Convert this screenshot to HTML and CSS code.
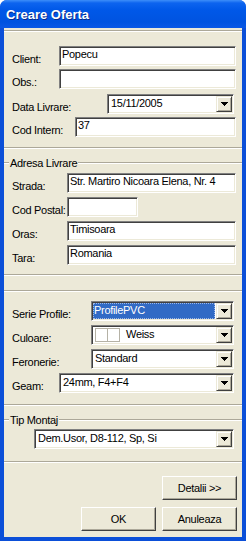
FILE: index.html
```html
<!DOCTYPE html>
<html lang="ro">
<head>
    <meta charset="UTF-8">
    <title>Creare Oferta</title>
    <link rel="stylesheet" href="styles.css">
</head>
<body>
    <div class="window">
        <div class="titlebar">Creare Oferta</div>
        <div class="client">
            <div class="etch top"></div>

            <div class="row first">
                <span class="lbl narrow">Client:</span>
                <div class="edit">Popecu</div>
            </div>
            <div class="row gap3">
                <span class="lbl narrow">Obs.:</span>
                <div class="edit"></div>
            </div>
            <div class="row gap5">
                <span class="lbl date">Data Livrare:</span>
                <div class="combo">
                    <span class="combo-text">15/11/2005</span>
                    <span class="drop"><svg width="7" height="4" viewBox="0 0 7 4"><path d="M0 0h7v1h-1v1h-1v1h-1v1h-1v-1h-1v-1h-1v-1h-1z"/></svg></span>
                </div>
            </div>
            <div class="row gap3">
                <span class="lbl code">Cod Intern:</span>
                <div class="edit">37</div>
            </div>

            <div class="etch after-1"></div>

            <div class="group-head">
                <span class="tick"></span>
                <span class="group-title">Adresa Livrare</span>
                <span class="line"></span>
            </div>
            <div class="row gap3">
                <span class="lbl addr">Strada:</span>
                <div class="edit">Str. Martiro Nicoara Elena, Nr. 4</div>
            </div>
            <div class="row gap4">
                <span class="lbl addr">Cod Postal:</span>
                <div class="edit short"></div>
            </div>
            <div class="row gap4">
                <span class="lbl addr">Oras:</span>
                <div class="edit">Timisoara</div>
            </div>
            <div class="row gap4">
                <span class="lbl addr">Tara:</span>
                <div class="edit">Romania</div>
            </div>

            <div class="etch after-2"></div>
            <div class="etch before-3"></div>

            <div class="row gap9">
                <span class="lbl wide">Serie Profile:</span>
                <div class="combo">
                    <span class="combo-text selected">ProfilePVC</span>
                    <span class="drop"><svg width="7" height="4" viewBox="0 0 7 4"><path d="M0 0h7v1h-1v1h-1v1h-1v1h-1v-1h-1v-1h-1v-1h-1z"/></svg></span>
                </div>
            </div>
            <div class="row gap4">
                <span class="lbl wide">Culoare:</span>
                <div class="combo">
                    <span class="swatch"><span></span><span></span></span>
                    <span class="combo-text">Weiss</span>
                    <span class="drop"><svg width="7" height="4" viewBox="0 0 7 4"><path d="M0 0h7v1h-1v1h-1v1h-1v1h-1v-1h-1v-1h-1v-1h-1z"/></svg></span>
                </div>
            </div>
            <div class="row gap4">
                <span class="lbl wide">Feronerie:</span>
                <div class="combo">
                    <span class="combo-text">Standard</span>
                    <span class="drop"><svg width="7" height="4" viewBox="0 0 7 4"><path d="M0 0h7v1h-1v1h-1v1h-1v1h-1v-1h-1v-1h-1v-1h-1z"/></svg></span>
                </div>
            </div>
            <div class="row gap4">
                <span class="lbl narrow">Geam:</span>
                <div class="combo">
                    <span class="combo-text">24mm, F4+F4</span>
                    <span class="drop"><svg width="7" height="4" viewBox="0 0 7 4"><path d="M0 0h7v1h-1v1h-1v1h-1v1h-1v-1h-1v-1h-1v-1h-1z"/></svg></span>
                </div>
            </div>

            <div class="etch after-3"></div>

            <div class="group-head">
                <span class="tick"></span>
                <span class="group-title">Tip Montaj</span>
                <span class="line"></span>
            </div>
            <div class="row gap2">
                <span class="lbl indent"></span>
                <div class="combo">
                    <span class="combo-text">Dem.Usor, D8-112, Sp, Si</span>
                    <span class="drop"><svg width="7" height="4" viewBox="0 0 7 4"><path d="M0 0h7v1h-1v1h-1v1h-1v1h-1v-1h-1v-1h-1v-1h-1z"/></svg></span>
                </div>
            </div>

            <div class="etch after-4"></div>

            <div class="buttons details">
                <button class="btn">Detalii &gt;&gt;</button>
            </div>
            <div class="buttons actions">
                <button class="btn">OK</button>
                <button class="btn">Anuleaza</button>
            </div>
        </div>
    </div>
</body>
</html>
```

FILE: styles.css
```css
body {
    margin: 0;
    padding: 0;
    background: #fff;
    font-family: "Liberation Sans", Arial, sans-serif;
    font-size: 11px;
    letter-spacing: -0.3px;
    color: #000;
}
.window {
    width: 246px;
    height: 541px;
    display: flex;
    flex-direction: column;
    background: #0b4fd8;
    border-radius: 7px 7px 0 0;
    overflow: hidden;
}
.titlebar {
    height: 28px;
    flex-shrink: 0;
    box-sizing: border-box;
    padding: 7px 0 0 6px;
    background: linear-gradient(to bottom, #3d8ef9 0, #0d64ef 3px, #0058e8 10px, #0053e0 22px, #0a58e6 28px);
    color: #fff;
    font-size: 13px;
    font-weight: bold;
    line-height: 16px;
    letter-spacing: 0;
    text-shadow: 1px 1px #0a2a8a;
}
.client {
    flex: 1;
    margin: 0 4px 4px;
    background: #ece9d8;
    display: flex;
    flex-direction: column;
}

/* etched separators */
.etch {
    height: 0;
    border-top: 1px solid #aca899;
    border-bottom: 1px solid #fff;
}
.etch.top { margin-top: 2px; }
.etch.after-1 { margin-top: 10px; }
.etch.after-2 { margin-top: 9px; }
.etch.before-3 { margin-top: 14px; }
.etch.after-3 { margin-top: 11px; }
.etch.after-4 { margin-top: 12px; }

.group-head {
    display: flex;
    align-items: center;
    height: 14px;
    margin-top: 7px;
}
.group-head .tick,
.group-head .line {
    height: 0;
    border-top: 1px solid #aca899;
    border-bottom: 1px solid #fff;
}
.group-head .tick { width: 5px; }
.group-head .line { flex: 1; }
.group-title {
    padding: 0 1px;
    line-height: 14px;
}

/* form rows */
.row {
    display: flex;
    align-items: flex-end;
    padding: 0 6px 0 8px;
}
.row.first { margin-top: 14px; }
.row.gap2 { margin-top: 2px; }
.row.gap3 { margin-top: 3px; }
.row.gap4 { margin-top: 4px; }
.row.gap5 { margin-top: 5px; }
.row.gap9 { margin-top: 9px; }

.lbl {
    flex-shrink: 0;
    line-height: 13px;
    white-space: nowrap;
}
.lbl.indent { width: 22px; }
.lbl.narrow { width: 47px; }
.lbl.addr { width: 55px; }
.lbl.code { width: 63px; }
.lbl.wide { width: 79px; }
.lbl.date { width: 95px; }

.edit, .combo {
    flex: 1;
    height: 20px;
    box-sizing: border-box;
    background: #fff;
    border-top: 1px solid #808080;
    border-left: 1px solid #808080;
    border-right: 1px solid #fff;
    border-bottom: 1px solid #fff;
    box-shadow: inset 1px 1px #404040, inset -1px -1px #ece9d8;
    white-space: nowrap;
    overflow: hidden;
}
.edit {
    padding: 1px 2px 0 2px;
    line-height: 13px;
}
.edit.short {
    flex: none;
    width: 71px;
}
.combo {
    display: flex;
    align-items: stretch;
    margin-right: 2px;
    padding: 1px;
}
.combo-text {
    flex: 1;
    padding-left: 2px;
    line-height: 15px;
}
.combo-text.selected {
    margin: 0 1px 0 0;
    padding-left: 1px;
    background: #316ac5;
    color: #fff;
    outline: 1px dotted #9fb8e6;
    outline-offset: -1px;
}
.swatch {
    display: flex;
    margin: 1px 4px 1px 2px;
}
.swatch span {
    width: 11px;
    border: 1px solid #b5b2a6;
    background: #fff;
}
.swatch span + span { border-left: none; }
.drop {
    width: 16px;
    flex-shrink: 0;
    box-sizing: border-box;
    display: flex;
    align-items: center;
    justify-content: center;
    background: #ece9d8;
    border-top: 1px solid #ece9d8;
    border-left: 1px solid #ece9d8;
    border-right: 1px solid #404040;
    border-bottom: 1px solid #404040;
    box-shadow: inset 1px 1px #fff, inset -1px -1px #aca899;
}
.drop svg { display: block; }

/* buttons */
.buttons {
    display: flex;
    justify-content: flex-end;
    gap: 6px;
    padding-right: 5px;
}
.buttons.details { margin-top: 13px; }
.buttons.actions { margin-top: 7px; }
.btn {
    width: 75px;
    height: 24px;
    margin: 0;
    padding: 0;
    font-family: inherit;
    font-size: 11px;
    letter-spacing: -0.3px;
    color: #000;
    background: #ece9d8;
    border-top: 1px solid #fff;
    border-left: 1px solid #fff;
    border-right: 1px solid #404040;
    border-bottom: 1px solid #404040;
    box-shadow: inset -1px -1px #aca899;
}
```
